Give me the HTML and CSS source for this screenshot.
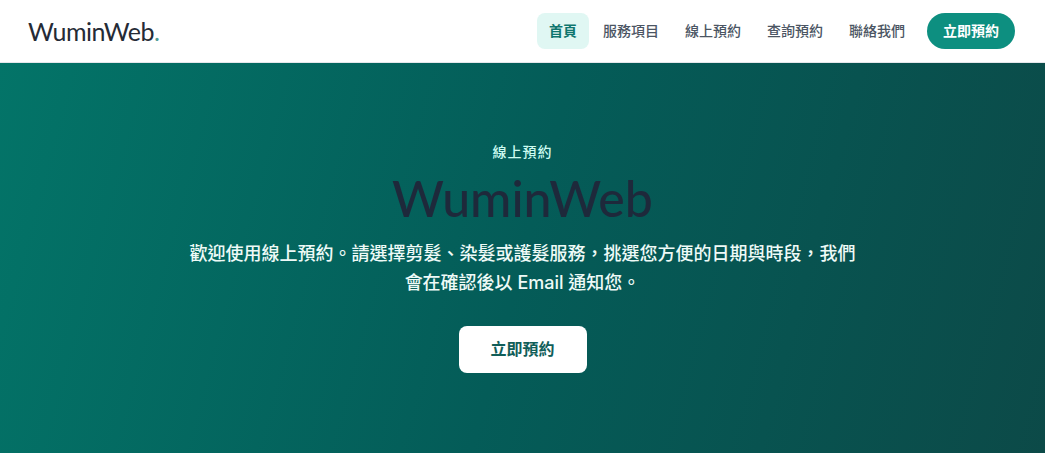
FILE: index.html
```html
<!DOCTYPE html>
<html lang="zh-Hant">
<head>
    <meta charset="UTF-8">
    <meta name="viewport" content="width=device-width, initial-scale=1.0">
    <title>WuminWeb 線上預約</title>
    <link rel="stylesheet" href="styles.css">
</head>
<body>
    <header class="site-header">
        <a class="logo" href="#">WuminWeb<span class="logo-dot">.</span></a>
        <nav class="main-nav">
            <a class="nav-link active" href="#">首頁</a>
            <a class="nav-link" href="#">服務項目</a>
            <a class="nav-link" href="#">線上預約</a>
            <a class="nav-link" href="#">查詢預約</a>
            <a class="nav-link" href="#">聯絡我們</a>
            <a class="nav-cta" href="#">立即預約</a>
        </nav>
    </header>

    <section class="hero">
        <p class="hero-eyebrow">線上預約</p>
        <h1 class="hero-title">WuminWeb</h1>
        <p class="hero-text">歡迎使用線上預約。請選擇剪髮、染髮或護髮服務，挑選您方便的日期與時段，我們會在確認後以 Email 通知您。</p>
        <a class="hero-button" href="#">立即預約</a>
    </section>
</body>
</html>
```

FILE: styles.css
```css
body {
    margin: 0;
    font-family: "Inter", "Noto Sans CJK TC", sans-serif;
    color: #1f2937;
    background: #ffffff;
}
a {
    text-decoration: none;
}

/* header */
.site-header {
    height: 62px;
    padding: 0 30px 0 28px;
    display: flex;
    align-items: center;
    justify-content: space-between;
    background: #ffffff;
    border-bottom: 1px solid #e5e7eb;
}
.logo {
    font-family: "Lato", "Noto Sans", sans-serif;
    font-size: 25px;
    font-weight: 400;
    color: #252b36;
    letter-spacing: -0.5px;
}
.logo-dot {
    color: #4f9d94;
}
.main-nav {
    display: flex;
    align-items: center;
    gap: 2px;
}
.nav-link {
    padding: 0 12px;
    height: 36px;
    line-height: 36px;
    border-radius: 8px;
    font-size: 14px;
    font-weight: 500;
    color: #4b5563;
}
.nav-link.active {
    background: #e0f7f3;
    color: #0f766e;
    font-weight: 700;
}
.nav-cta {
    margin-left: 8px;
    padding: 0 16px;
    height: 36px;
    line-height: 36px;
    border-radius: 999px;
    background: #0d8f80;
    color: #ffffff;
    font-size: 14px;
    font-weight: 700;
}

/* hero */
.hero {
    height: 390px;
    box-sizing: border-box;
    padding-top: 78px;
    display: flex;
    flex-direction: column;
    align-items: center;
    text-align: center;
    background: linear-gradient(105deg, #037468 0%, #045c58 50%, #0c4a48 100%);
}
.hero-eyebrow {
    margin: 0;
    font-size: 14px;
    font-weight: 500;
    letter-spacing: 1px;
    color: #ccfbf1;
}
.hero-title {
    margin: 7px 0 0;
    font-family: "Lato", "Noto Sans", sans-serif;
    font-size: 50px;
    font-weight: 500;
    line-height: 60px;
    color: #1e293b;
}
.hero-text {
    margin: 11px 0 0;
    max-width: 680px;
    font-size: 18px;
    font-weight: 500;
    line-height: 29px;
    color: #eefaf7;
}
.hero-button {
    margin-top: 29px;
    width: 128px;
    height: 47px;
    line-height: 47px;
    border-radius: 8px;
    background: #ffffff;
    color: #115e59;
    font-size: 16px;
    font-weight: 700;
}
```
